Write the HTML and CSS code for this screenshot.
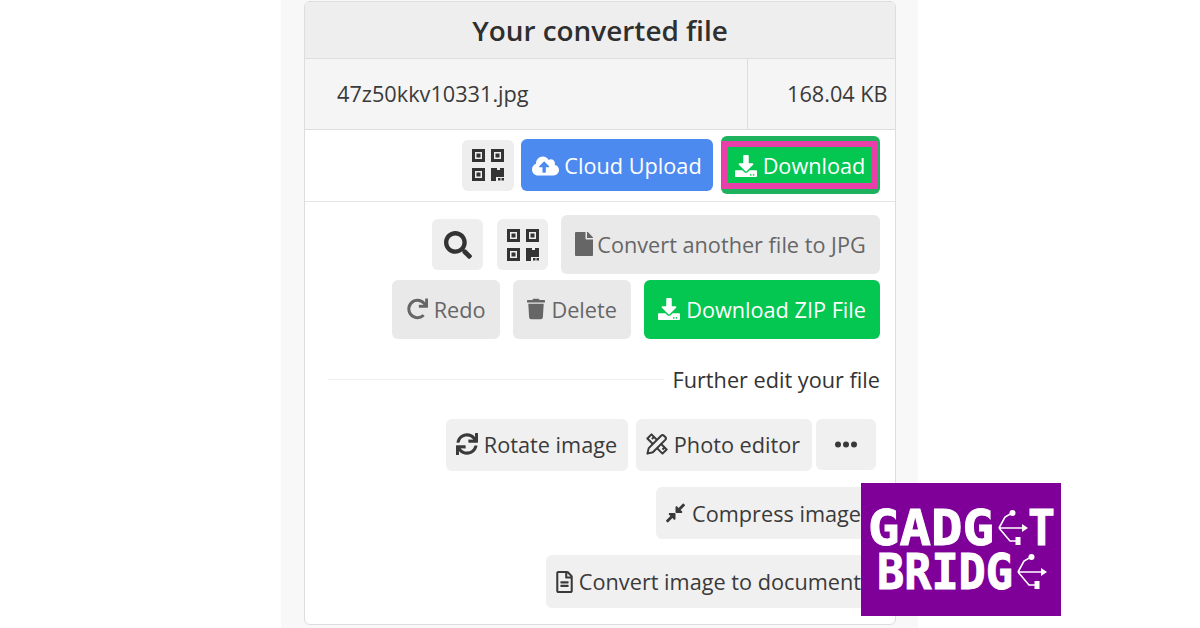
FILE: index.html
```html
<!DOCTYPE html>
<html lang="en">
<head>
<meta charset="utf-8">
<title>Your converted file</title>
<link rel="stylesheet" href="styles.css">
</head>
<body>
<svg class="sprite" xmlns="http://www.w3.org/2000/svg">
  <symbol id="i-qr" viewBox="0 0 32 32"><path fill-rule="evenodd" d="M0 0h13v13H0zM3 3v7h7V3zM19 0h13v13H19zM22 3v7h7V3zM0 19h13v13H0zM3 22v7h7v-7z"/><path d="M4.500 4.500h4v4h-4zM23.500 4.500h4v4h-4zM4.500 23.500h4v4h-4zM19 19h6v2h3v-2h4v9h-8v4h-5zM26 29h2.500v2.500H26zM29.500 29H32v2.500h-2.500z"/></symbol>
  <symbol id="i-dl" viewBox="0 0 512 512"><path d="M216 0h80c13.3 0 24 10.7 24 24v168h87.7c17.8 0 26.7 21.5 14.1 34.1L269.7 378.3c-7.5 7.5-19.8 7.5-27.3 0L90.1 226.1c-12.6-12.6-3.7-34.1 14.1-34.1H192V24c0-13.3 10.7-24 24-24zm296 376v112c0 13.3-10.7 24-24 24H24c-13.3 0-24-10.7-24-24V376c0-13.3 10.7-24 24-24h146.7l49 49c20.1 20.1 52.5 20.1 72.6 0l49-49H488c13.3 0 24 10.7 24 24zm-124 88c0-11-9-20-20-20s-20 9-20 20 9 20 20 20 20-9 20-20zm64 0c0-11-9-20-20-20s-20 9-20 20 9 20 20 20 20-9 20-20z"/></symbol>
  <symbol id="i-usb" viewBox="0 0 30 36"><path d="M1 18H26M1 18L7 7L14 3M1 18L12 31H20" fill="none" stroke="#fff" stroke-width="1.600"/><circle cx="14.500" cy="3" r="3" fill="#fff"/><rect x="17.500" y="27" width="5" height="8" fill="#fff"/><path d="M24 14l6 4-6 4z" fill="#fff"/></symbol>
</svg>
<main class="panel">
  <section class="card">
    <h1 class="card-title">Your converted file</h1>
    <div class="file-row">
      <div class="file-name">47z50kkv10331.jpg</div>
      <div class="file-size">168.04 KB</div>
    </div>
    <div class="result-actions">
      <button class="btn btn-icon btn-light btn-dark-icon btn-first"><svg class="ico ico-qr"><use href="#i-qr"/></svg></button>
      <button class="btn btn-blue"><svg class="ico ico-cloud" viewBox="0 0 640 512"><path d="M537.6 226.6c4.1-10.7 6.4-22.4 6.4-34.6 0-53-43-96-96-96-19.7 0-38.1 6-53.3 16.2C367 64.2 315.3 32 256 32c-88.4 0-160 71.6-160 160 0 2.7.1 5.4.2 8.1C40.2 219.8 0 273.2 0 336c0 79.5 64.5 144 144 144h368c70.7 0 128-57.3 128-128 0-61.9-44-113.6-102.4-125.4zM393.4 288H328v112c0 8.8-7.2 16-16 16h-48c-8.8 0-16-7.2-16-16V288h-65.4c-14.3 0-21.4-17.2-11.3-27.3l105.4-105.4c6.2-6.2 16.4-6.2 22.6 0l105.4 105.4c10.1 10.1 2.9 27.3-11.3 27.3z"/></svg>Cloud Upload</button>
      <div class="highlight"><button class="btn btn-green btn-inner"><svg class="ico ico-dl"><use href="#i-dl"/></svg>Download</button></div>
    </div>
    <div class="more-actions">
      <div class="action-row row-one">
        <button class="btn btn-icon btn-icon-wide btn-light btn-dark-icon btn-search"><svg class="ico ico-search" viewBox="0 0 512 512"><path d="M505 442.7L405.3 343c-4.5-4.5-10.6-7-17-7H372c27.6-35.3 44-79.7 44-128C416 93.1 322.9 0 208 0S0 93.1 0 208s93.1 208 208 208c48.3 0 92.7-16.4 128-44v16.3c0 6.4 2.5 12.5 7 17l99.7 99.7c9.4 9.4 24.6 9.4 33.9 0l28.3-28.3c9.4-9.4 9.4-24.6.1-34zM208 336c-70.7 0-128-57.2-128-128 0-70.7 57.2-128 128-128 70.7 0 128 57.2 128 128 0 70.7-57.2 128-128 128z"/></svg></button>
        <button class="btn btn-icon btn-icon-wide btn-light btn-dark-icon"><svg class="ico ico-qr"><use href="#i-qr"/></svg></button>
        <button class="btn btn-grey btn-tall btn-convert"><svg class="ico ico-file" viewBox="0 0 384 512"><path d="M224 136V0H24C10.7 0 0 10.7 0 24v464c0 13.3 10.7 24 24 24h336c13.3 0 24-10.7 24-24V160H248c-13.2 0-24-10.8-24-24zm160-14.1v6.1H256V0h6.1c6.4 0 12.5 2.5 17 7l97.9 98c4.5 4.5 7 10.6 7 16.9z"/></svg>Convert another file to JPG</button>
      </div>
      <div class="action-row">
        <button class="btn btn-grey btn-tall btn-redo"><svg class="ico ico-redo" viewBox="0 0 512 512"><path d="M500.33 0h-47.41a12 12 0 0 0-12 12.57l4 82.76A247.42 247.42 0 0 0 256 8C119.34 8 7.9 119.53 8 256.19 8.1 393.07 119.1 504 256 504a247.1 247.1 0 0 0 166.18-63.91 12 12 0 0 0 .48-17.43l-34-34a12 12 0 0 0-16.38-.55A176 176 0 1 1 402.1 157.8l-101.53-4.87a12 12 0 0 0-12.57 12v47.41a12 12 0 0 0 12 12h200.33a12 12 0 0 0 12-12V12a12 12 0 0 0-12-12z"/></svg>Redo</button>
        <button class="btn btn-grey btn-tall btn-delete"><svg class="ico ico-trash" viewBox="0 0 448 512"><path d="M432 32H312l-9.4-18.7A24 24 0 0 0 281.1 0H166.8a23.72 23.72 0 0 0-21.4 13.3L136 32H16A16 16 0 0 0 0 48v32a16 16 0 0 0 16 16h416a16 16 0 0 0 16-16V48a16 16 0 0 0-16-16zM53.2 467a48 48 0 0 0 47.9 45h245.8a48 48 0 0 0 47.9-45L416 128H32z"/></svg>Delete</button>
        <button class="btn btn-green btn-tall"><svg class="ico ico-dl"><use href="#i-dl"/></svg>Download ZIP File</button>
      </div>
      <div class="divider-row">
        <span class="divider-line"></span>
        <span class="divider-text">Further edit your file</span>
      </div>
    </div>
    <div class="edit-actions">
      <div class="edit-row">
        <button class="btn btn-pale btn-rotate"><svg class="ico ico-sync" viewBox="0 0 512 512"><path d="M440.65 12.57l4 82.77A247.16 247.16 0 0 0 255.83 8C134.73 8 33.91 94.92 12.29 209.82A12 12 0 0 0 24.09 224h49.05a12 12 0 0 0 11.67-9.26 175.91 175.91 0 0 1 317-56.94l-101.46-4.86a12 12 0 0 0-12.57 12v47.41a12 12 0 0 0 12 12H500a12 12 0 0 0 12-12V12a12 12 0 0 0-12-12h-47.37a12 12 0 0 0-11.98 12.57zM255.83 432a175.61 175.61 0 0 1-146-77.8l101.8 4.87a12 12 0 0 0 12.57-12v-47.4a12 12 0 0 0-12-12H12a12 12 0 0 0-12 12V500a12 12 0 0 0 12 12h47.35a12 12 0 0 0 12-12.6l-4.15-82.57A247.17 247.17 0 0 0 255.83 504c121.11 0 221.93-86.92 243.55-201.82a12 12 0 0 0-11.8-14.18h-49.05a12 12 0 0 0-11.67 9.26A175.86 175.86 0 0 1 255.83 432z"/></svg>Rotate image</button>
        <button class="btn btn-pale btn-photo"><svg class="ico ico-ruler" viewBox="0 0 24 24"><g class="ruler-lines"><path d="M1.500 6L6 1.500 22.500 18 18 22.500z"/><path d="M6.500 6.500l2-2M18 18l2-2"/></g><path class="pencil-body" d="M1.500 22.500l1.500-6L16.500 3a2.200 2.200 0 0 1 3.100 0l1.400 1.400a2.200 2.200 0 0 1 0 3.100L7.500 21z"/></svg>Photo editor</button>
        <button class="btn btn-pale btn-dots" aria-label="More"><svg class="ico ico-dots" viewBox="0 0 22 6"><circle cx="3" cy="3" r="3"/><circle cx="11" cy="3" r="3"/><circle cx="19" cy="3" r="3"/></svg></button>
      </div>
      <div class="edit-row">
        <button class="btn btn-pale btn-wide"><svg class="ico ico-compress" viewBox="0 0 448 512"><path d="M4.686 427.314L104 328l-32.922-31.029C55.958 281.851 66.666 256 88.048 256h112C213.303 256 224 266.745 224 280v112c0 21.382-25.803 32.09-40.922 16.971L152 376l-99.314 99.314c-6.248 6.248-16.379 6.248-22.627 0L4.686 449.941c-6.248-6.248-6.248-16.379 0-22.627zM443.314 84.686L344 184l32.922 31.029c15.12 15.12 4.412 40.971-16.97 40.971h-112C234.697 256 224 245.255 224 232V120c0-21.382 25.803-32.09 40.922-16.971L296 136l99.314-99.314c6.248-6.248 16.379-6.248 22.627 0l25.373 25.373c6.248 6.248 6.248 16.379 0 22.627z"/></svg>Compress image</button>
      </div>
      <div class="edit-row">
        <button class="btn btn-pale btn-wide btn-doc"><svg class="ico ico-doc" viewBox="0 0 384 512"><path d="M288 248v28c0 6.6-5.4 12-12 12H108c-6.600 0-12-5.400-12-12v-28c0-6.600 5.400-12 12-12h168c6.600 0 12 5.400 12 12zm-12 72H108c-6.600 0-12 5.400-12 12v28c0 6.600 5.400 12 12 12h168c6.600 0 12-5.400 12-12v-28c0-6.600-5.400-12-12-12zm108-188.100V464c0 26.500-21.500 48-48 48H48c-26.500 0-48-21.500-48-48V48C0 21.500 21.500 0 48 0h204.100C264.800 0 277 5.100 286 14.100L369.900 98c9 8.900 14.100 21.200 14.100 33.900zm-128-80V128h76.100L256 51.900zM336 464V176H232c-13.300 0-24-10.700-24-24V48H48v416h288z"/></svg>Convert image to document</button>
      </div>
    </div>
  </section>
</main>
<div class="logo">
  <svg class="logo-art" viewBox="0 0 200 133">
    <text class="logo-text" x="7" y="62" textLength="126" lengthAdjust="spacingAndGlyphs">GADG</text>
    <use href="#i-usb" x="137" y="27" width="30" height="36"/>
    <text class="logo-text" x="167" y="62" textLength="27" lengthAdjust="spacingAndGlyphs">T</text>
    <text class="logo-text" x="16" y="106" textLength="136" lengthAdjust="spacingAndGlyphs">BRIDG</text>
    <use href="#i-usb" x="156" y="71" width="30" height="36"/>
  </svg>
</div>
</body>
</html>
```

FILE: styles.css
```css
* { box-sizing: border-box; }
html, body { margin: 0; height: 628px; overflow: hidden; }
body {
  background: #fff;
  font-family: "Open Sans", sans-serif;
  color: #333;
  display: flex;
  justify-content: center;
}
.sprite { display: none; }
.panel {
  width: 637px;
  height: 628px;
  margin-left: -1px;
  padding: 1px 22px 0 23px;
  background: #f8f8f8;
}
.card {
  height: 624px;
  background: #fff;
  border: 1px solid #ddd;
  border-radius: 6px;
  overflow: hidden;
}
.card-title {
  margin: 0;
  height: 57px;
  display: flex;
  align-items: center;
  justify-content: center;
  background: #eee;
  border-bottom: 1px solid #ddd;
  font-size: 27.900px;
  font-weight: 600;
  color: #2f2f2f;
}
.file-row {
  height: 71px;
  display: flex;
  background: #f5f5f5;
  border-bottom: 1px solid #ddd;
  font-size: 21.700px;
  color: #3a3a3a;
}
.file-name { width: 442px; padding: 0 0 2px 32px; display: flex; align-items: center; }
.file-size { flex: 1; padding: 0 0 2px 39px; border-left: 1px solid #ddd; display: flex; align-items: center; white-space: nowrap; }
.btn {
  border: 0;
  margin: 0;
  font: inherit;
  font-size: 21.700px;
  border-radius: 6px;
  display: inline-flex;
  align-items: center;
  justify-content: center;
  white-space: nowrap;
  color: inherit;
  padding: 0 11px;
  height: 52px;
}
.ico { fill: currentColor; flex: none; }
.result-actions {
  height: 72px;
  display: flex;
  align-items: center;
  justify-content: flex-end;
  gap: 8px;
  padding: 0 15px 2px 0;
  border-bottom: 1px solid #e5e5e5;
}
.btn-icon { width: 52px; padding: 0; }
.btn-first { margin: 1px -1px 0 0; height: 51px; }
.btn-icon-wide { width: 51px; height: 51px; }
.btn-search { margin-right: 1px; }
.btn-light { background: #eee; }
.btn-dark-icon { color: #333; }
.btn-blue { background: #4d8af0; color: #fff; width: 192px; padding-top: 2px; }
.btn-green { background: #03c750; color: #fff; }
.highlight {
  width: 159px;
  height: 58px;
  padding: 5px 2px 5px 1px;
  background: #1fb25e;
  border-radius: 6px;
  display: flex;
}
.btn.btn-inner {
  flex: 1;
  height: 100%;
  padding: 2px 0 0;
  border-radius: 0;
  background: #03c750;
  border: 6px solid #e83fa8;
}
.more-actions { padding: 13px 15px 0 23px; }
.action-row {
  display: flex;
  justify-content: flex-end;
  align-items: center;
  gap: 13px;
  margin-bottom: 6px;
}
.btn-tall { height: 59px; padding: 0 14px 1px; }
.btn-convert { width: 319px; }
.btn-redo { width: 108px; }
.btn-delete { width: 118px; }
.btn-grey { background: #e9e9e9; color: #666; }
.divider-row {
  display: flex;
  align-items: center;
  gap: 9px;
  height: 30px;
  margin-top: 25px;
  font-size: 21.700px;
}
.divider-line { flex: 1; border-top: 1px solid #eee; }
.divider-text { white-space: nowrap; }
.edit-actions { padding: 25px 19px 0 0; }
.edit-row {
  display: flex;
  justify-content: flex-end;
  align-items: flex-start;
  gap: 8px;
  margin-bottom: 15px;
}
.btn-pale { background: #f0f0f0; color: #3a3a3a; padding: 0 11px 2px 10px; }
.btn-rotate { width: 182px; }
.btn-photo { width: 176px; margin-right: -4px; }
.btn-dots { width: 60px; height: 51px; padding: 0; }
.btn-wide { margin: 1px 4px 0 0; padding-bottom: 0; }
.btn-doc { height: 53px; }
.ico-qr { width: 32px; height: 32px; }
.ico-cloud { width: 27px; height: 24px; margin-right: 5px; }
.ico-dl { width: 22px; height: 22px; margin-right: 6px; }
.ico-search { width: 28px; height: 28px; }
.ico-file { width: 18px; height: 24px; margin-right: 4px; }
.ico-redo, .ico-trash { width: 21px; height: 22px; margin-right: 6px; }
.ico-trash { width: 18px; }
.ico-sync { width: 22px; height: 22px; margin-right: 6px; }
.ico-ruler { width: 22px; height: 22px; margin: 0 6px 0 -1px; }
.ruler-lines { fill: none; stroke: currentColor; stroke-width: 2.200px; stroke-linejoin: round; }
.pencil-body { fill: #f0f0f0; stroke: currentColor; stroke-width: 2.200px; stroke-linejoin: round; }
.ico-dots { width: 22px; height: 7px; }
.ico-compress { width: 19px; height: 22px; margin-right: 7px; }
.ico-doc { width: 17px; height: 22px; margin-right: 6px; }
.logo {
  position: absolute;
  left: 861px;
  top: 483px;
  width: 200px;
  height: 133px;
  background: #7e0099;
}
.logo-art { display: block; width: 200px; height: 133px; }
.logo-text {
  font-family: "DejaVu Sans Mono", monospace;
  font-weight: 700;
  font-size: 49px;
  fill: #fff;
  stroke: #fff;
  stroke-width: 1px;
}
```
